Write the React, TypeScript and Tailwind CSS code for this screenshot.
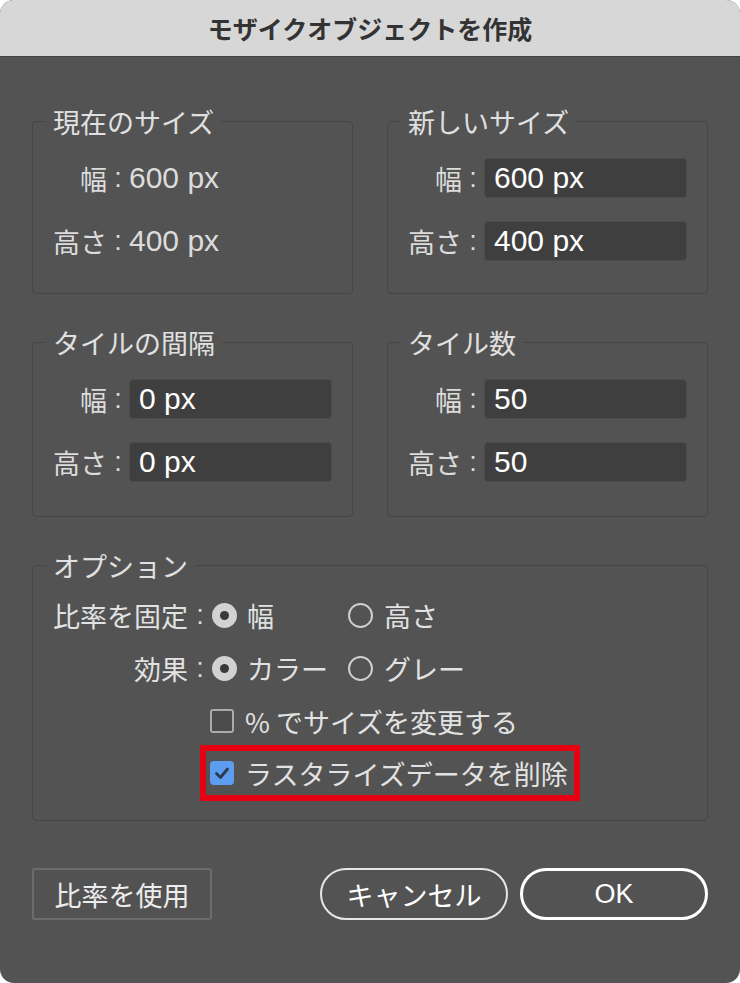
import React from "react";

const JP = "font-['Noto_Sans_CJK_JP','Liberation_Sans',sans-serif]";
const LAT = "font-['Liberation_Sans','Noto_Sans_CJK_JP',sans-serif]";

function Row({ label, value, input }: { label: string; value: string; input?: boolean }) {
  return (
    <div className="flex items-center h-[40px]">
      <span className={`w-[54px] whitespace-nowrap text-right text-[27px] leading-none text-[#dcdcdc] ${JP}`}>{label}</span>
      <span className={`w-[22px] text-center text-[27px] leading-none text-[#dcdcdc] ${LAT}`}>:</span>
      {input ? (
        <div
          className={`flex-1 h-[40px] bg-[#3f3f3f] border border-[#4b4b4b] rounded-[4px] pl-[9px] flex items-center text-white text-[30px] leading-none ${LAT}`}
        >
          {value}
        </div>
      ) : (
        <span className={`text-[30px] leading-none text-[#dcdcdc] ${LAT}`}>{value}</span>
      )}
    </div>
  );
}

function Group({ title, children, className = "" }: { title: string; children: React.ReactNode; className?: string }) {
  return (
    <fieldset className={`min-w-0 border border-[#464646] rounded-[4px] px-[20px] ${className}`}>
      <legend className={`-ml-[7px] px-[7px] text-[27px] leading-[27px] text-[#e0e0e0] ${JP}`}>{title}</legend>
      {children}
    </fieldset>
  );
}

function Radio({ checked }: { checked?: boolean }) {
  return checked ? (
    <span className="w-[25px] h-[25px] rounded-full bg-[#d2d2d2] flex items-center justify-center shrink-0">
      <span className="w-[9px] h-[9px] rounded-full bg-[#3a3a3a]" />
    </span>
  ) : (
    <span className="w-[25px] h-[25px] rounded-full border-2 border-[#cfcfcf] shrink-0" />
  );
}

function Check({ checked }: { checked?: boolean }) {
  return checked ? (
    <span className="w-[24px] h-[24px] rounded-[4px] bg-[#5d9df0] flex items-center justify-center shrink-0">
      <svg width="20" height="20" viewBox="0 0 20 20" fill="none">
        <path d="M4.5 10.5 L8.5 14.5 L15.5 6" stroke="#2c3a4e" strokeWidth="2.8" strokeLinecap="round" strokeLinejoin="round" />
      </svg>
    </span>
  ) : (
    <span className="w-[24px] h-[24px] rounded-[3px] border-2 border-[#aaaaaa] bg-[#4b4b4b] shrink-0" />
  );
}

export default function App() {
  const txt = `text-[27px] leading-none text-[#e2e2e2] ${JP}`;
  return (
    <div className="w-[740px] h-[983px] bg-white">
      <div className="w-[740px] h-[983px] rounded-[14px] overflow-hidden bg-[#535353] flex flex-col">
        <div className="h-[57px] shrink-0 bg-[#d7d7d7] border-b border-[#444] flex items-center justify-center">
          <span className={`text-[25px] font-bold text-[#333333] leading-none ${JP}`}>モザイクオブジェクトを作成</span>
        </div>
        <div className="px-[32px] pt-[51px] flex flex-col">
          <div className="grid grid-cols-2 gap-x-[34px] gap-y-[35px]">
            <Group title="現在のサイズ" className="pt-[23px] pb-[32px]">
              <div className="flex flex-col gap-[23px]">
                <Row label="幅" value="600 px" />
                <Row label="高さ" value="400 px" />
              </div>
            </Group>
            <Group title="新しいサイズ" className="pt-[23px] pb-[32px]">
              <div className="flex flex-col gap-[23px]">
                <Row label="幅" value="600 px" input />
                <Row label="高さ" value="400 px" input />
              </div>
            </Group>
            <Group title="タイルの間隔" className="pt-[23px] pb-[34px]">
              <div className="flex flex-col gap-[23px]">
                <Row label="幅" value="0 px" input />
                <Row label="高さ" value="0 px" input />
              </div>
            </Group>
            <Group title="タイル数" className="pt-[23px] pb-[34px]">
              <div className="flex flex-col gap-[23px]">
                <Row label="幅" value="50" input />
                <Row label="高さ" value="50" input />
              </div>
            </Group>
          </div>

          <Group title="オプション" className="mt-[35px] pt-[16px] pb-[19px]">
            <div className="flex items-center h-[40px]">
              <span className={`w-[135px] text-right ${txt}`}>比率を固定</span>
              <span className={`w-[24px] text-center text-[27px] leading-none text-[#dcdcdc] ${LAT}`}>:</span>
              <div className="w-[136px] flex items-center gap-[10px]">
                <Radio checked />
                <span className={txt}>幅</span>
              </div>
              <div className="flex items-center gap-[11px]">
                <Radio />
                <span className={txt}>高さ</span>
              </div>
            </div>
            <div className="flex items-center h-[40px] mt-[13px]">
              <span className={`w-[135px] text-right ${txt}`}>効果</span>
              <span className={`w-[24px] text-center text-[27px] leading-none text-[#dcdcdc] ${LAT}`}>:</span>
              <div className="w-[136px] flex items-center gap-[10px]">
                <Radio checked />
                <span className={txt}>カラー</span>
              </div>
              <div className="flex items-center gap-[11px]">
                <Radio />
                <span className={txt}>グレー</span>
              </div>
            </div>
            <div className="flex items-center h-[40px] mt-[13px] ml-[157px] gap-[11px]">
              <Check />
              <span className={txt}>% でサイズを変更する</span>
            </div>
            <div className="flex items-center h-[56px] w-[380px] mt-[4px] ml-[147px] border-[6px] border-[#e50012] pl-[4px] gap-[11px]">
              <Check checked />
              <span className={txt}>ラスタライズデータを削除</span>
            </div>
          </Group>

          <div className="flex items-center mt-[47px]">
            <button className={`w-[180px] h-[52px] border-2 border-[#6c6c6c] rounded-[3px] bg-[#525252] text-[27px] leading-none text-[#ececec] ${JP}`}>
              比率を使用
            </button>
            <button className={`ml-auto w-[188px] h-[52px] border-2 border-[#e6e6e6] rounded-full text-[27px] leading-none text-white ${JP}`}>
              キャンセル
            </button>
            <button className={`ml-[12px] w-[188px] h-[52px] border-[3px] border-white rounded-full text-[27px] leading-none text-white ${LAT}`}>
              OK
            </button>
          </div>
        </div>
      </div>
    </div>
  );
}
